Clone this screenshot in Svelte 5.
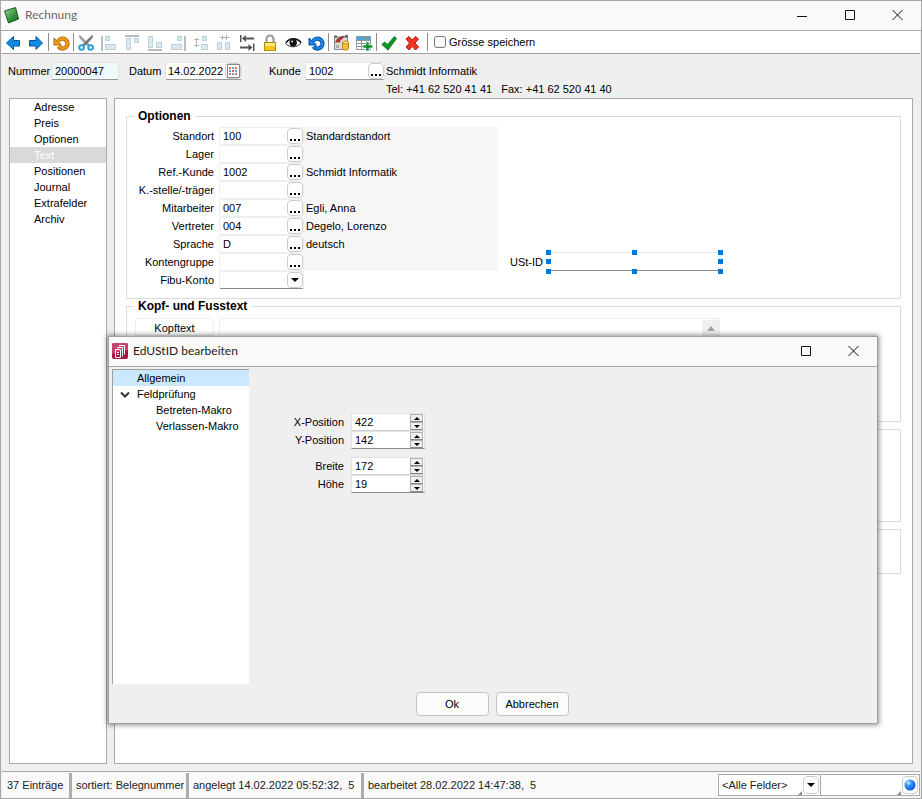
<script>
  const nav = ['Adresse', 'Preis', 'Optionen', 'Text', 'Positionen', 'Journal', 'Extrafelder', 'Archiv'];
  let active = $state('Text');

  const rows = [
    { id: 'standort', label: 'Standort', value: '100', info: 'Standardstandort' },
    { id: 'lager', label: 'Lager', value: '', info: '' },
    { id: 'refkunde', label: 'Ref.-Kunde', value: '1002', info: 'Schmidt Informatik' },
    { id: 'kst', label: 'K.-stelle/-träger', value: '', info: '' },
    { id: 'mitarbeiter', label: 'Mitarbeiter', value: '007', info: 'Egli, Anna' },
    { id: 'vertreter', label: 'Vertreter', value: '004', info: 'Degelo, Lorenzo' },
    { id: 'sprache', label: 'Sprache', value: 'D', info: 'deutsch' },
    { id: 'konten', label: 'Kontengruppe', value: '', info: '' }
  ];

  const tree = [
    { label: 'Allgemein', level: 1 },
    { label: 'Feldprüfung', level: 1, open: true },
    { label: 'Betreten-Makro', level: 2 },
    { label: 'Verlassen-Makro', level: 2 }
  ];
  let selected = $state('Allgemein');

  let spins = $state([
    [{ id: 'xpos', label: 'X-Position', value: 422 }, { id: 'ypos', label: 'Y-Position', value: 142 }],
    [{ id: 'breite', label: 'Breite', value: 172 }, { id: 'hoehe', label: 'Höhe', value: 19 }]
  ]);

  const handles = ['tl', 'tc', 'tr', 'ml', 'mr', 'bl', 'bc', 'br'];

  const box = 'fill="#dbeaf1" stroke="#b9cfda"';
  const bar = 'fill="#b9bcbf"';
  const turn = (fill, edge) =>
    `<path d="M5 8.500A5 5 0 1 1 5.500 13.500" fill="none" stroke="${edge}" stroke-width="4.200"/><path d="M1 5V12H8.500z" fill="${fill}" stroke="${edge}" stroke-linejoin="round"/><path d="M5 8.500A5 5 0 1 1 5.800 13.800" fill="none" stroke="${fill}" stroke-width="2.400"/>`;

  const tools = [
    { name: 'Zurück', svg: '<path d="M1.5 10 8.5 3.5V7.500H14.500V13H8.500V16.500z" fill="#0c8ce0" stroke="#0b4fa5" stroke-linejoin="round"/>' },
    { name: 'Vorwärts', svg: '<path d="M14.500 10 8 3.500V7.500H1.500V13H8V16.500z" fill="#0c8ce0" stroke="#0b4fa5" stroke-linejoin="round"/>' },
    { sep: true },
    { name: 'Rückgängig', svg: turn('#f79a10', '#b56a08') },
    { sep: true },
    { name: 'Ausschneiden', svg: '<path d="M1 2 2.500 2.500 12 12 10 13.500 7 11 1.500 5z" fill="#999c9f"/><path d="M15 2 13.500 2.500 4 12 6 13.500 9 11 14.500 5z" fill="#77797c"/><circle cx="3.600" cy="14.500" r="2.300" fill="none" stroke="#2a9fdc" stroke-width="2"/><circle cx="12.600" cy="14.500" r="2.300" fill="none" stroke="#2a9fdc" stroke-width="2"/>' },
    { name: 'Links ausrichten', svg: `<path d="M0 3h2v15H0z" ${bar}/><path d="M4.500 3.500h4v4h-4zM4.500 11.500h10v5h-10z" ${box}/>` },
    { name: 'Oben ausrichten', svg: `<path d="M1 2h14v2H1z" ${bar}/><path d="M2.500 5.500h4v11h-4zM10.500 5.500h4v4h-4z" ${box}/>` },
    { name: 'Unten ausrichten', svg: `<path d="M1 16h14v2H1z" ${bar}/><path d="M1.500 3.500h4v11h-4zM9.500 9.500h5v5h-5z" ${box}/>` },
    { name: 'Rechts ausrichten', svg: `<path d="M14 3h2v15h-2z" ${bar}/><path d="M7.500 3.500h4v4h-4zM1.500 11.500h10v5h-10z" ${box}/>` },
    { name: 'Vertikal verteilen', svg: `<path d="M1 6.500h5M1 12.500h5M3.500 5v9" stroke="#b0b4b7"/><path d="M9.500 3.500h4v4h-4zM8.500 11.500h6v5h-6z" ${box}/>` },
    { name: 'Horizontal verteilen', svg: `<path d="M3.500 4.500h10M6.500 2v5M10.500 2v5" stroke="#b0b4b7"/><path d="M1.500 9.500h4v7h-4zM9.500 9.500h4v7h-4z" ${box}/>` },
    { name: 'Tabulatorfolge', svg: '<path d="M1 2h1.500v7H1zM14 10.500h1.500V18H14z" fill="#555"/><path d="M15 5.500H5M1 14.500h10" stroke="#555" stroke-width="2"/><path d="M3 5.500 7 2v7zM13.500 14.500l-4-3.500v7z" fill="#555"/>' },
    { name: 'Sperren', svg: '<path d="M4.500 10V6a3.500 3.500 0 0 1 7 0V10" fill="none" stroke="#9a9da1" stroke-width="2.200"/><rect x="2.500" y="9.500" width="11" height="8" fill="#f5c518" stroke="#b18a10"/><path d="M3 10h10v3H3z" fill="#ffe97a"/>' },
    { name: 'Anzeigen', svg: '<path d="M.5 10.500C4.500 4.500 12 4.500 16 10 12 15 5 15 .5 10.500z" fill="#fff" stroke="#333"/><path d="M1 9.500C5 4.500 12 4.500 16 9.500" fill="none" stroke="#111" stroke-width="1.600"/><circle cx="8.200" cy="9.800" r="3.700" fill="#111"/><circle cx="7.200" cy="8.500" r="1" fill="#ddd"/>' },
    { name: 'Wiederherstellen', svg: turn('#1786e0', '#0a4aa0') },
    { sep: true },
    { name: 'Archivieren', svg: '<path d="M1.500 4v12.500h13V4z" fill="#dedede" stroke="#8a8a8a"/><path d="M1 4.500V2.500h3v2zM12 4.500V2h3v2.500z" fill="#666"/><path d="M3.500 12.500h2v2h-2z" fill="#fff" stroke="#999"/><path d="M2 9.500C3.500 5 7 2.500 12 3L9 6.500C8 6.500 7.500 7.500 7 9.500z" fill="#a83a3c"/><path d="M9.500 9.500v6c0 2 6 2 6 0v-6z" fill="#f9c04a" stroke="#b87b0b"/><ellipse cx="12.500" cy="9.500" rx="3" ry="1.500" fill="#ffe8ac" stroke="#b87b0b"/>' },
    { name: 'Tabelle ergänzen', svg: '<path d="M.5 3.500h14v13H.5z" fill="#fff" stroke="#8d9aa0"/><path d="M1 4h13v3H1z" fill="#4da3d0"/><path d="M5.500 3v14M10.500 3v14M.5 7.500h14M.5 10.500h14M.5 13.500h14" stroke="#8d9aa0"/><path d="M10 9h3v3h3.500v3H13v3h-3v-3H7v-3h3z" fill="#149022" stroke="#fff" stroke-width=".5"/>' },
    { sep: true },
    { name: 'Übernehmen', svg: '<path d="M1 11.500 3.500 9l3 2.500L13.500 3.500l2 2L7 17z" fill="#12962a" stroke="#0c7a1f" stroke-linejoin="round"/>' },
    { name: 'Verwerfen', svg: '<path d="M2 6l3-2.500L8.200 7 11.500 3.500l3 2.500-3.500 4 3.500 4-3 3-3.300-3.700L5 17l-3-3 3.500-4z" fill="#f03420" stroke="#b81c10" stroke-linejoin="round"/>' }
  ];
</script>

{#snippet dots(label)}
  <button class="mini dots" aria-label={label}>
    <svg width="10" height="2" viewBox="0 0 10 2"><path d="M0 0h2v2H0zM4 0h2v2H4zM8 0h2v2H8z" /></svg>
  </button>
{/snippet}

{#snippet maximize()}
  <button class="cap" aria-label="Maximieren">
    <svg width="12" height="12" viewBox="0 0 12 12"><path d="M2.500 1.500h9v9h-9z" /></svg>
  </button>
{/snippet}

{#snippet close()}
  <button class="cap" aria-label="Schliessen">
    <svg width="12" height="12" viewBox="0 0 12 12"><path d="M1.500 1l10 10M11.500 1l-10 10" /></svg>
  </button>
{/snippet}

<main class="window">
  <header class="title">
    <svg width="18" height="18" viewBox="0 0 18 18">
      <defs><linearGradient id="leaf" x1="0" y1="0" x2="1" y2="1"><stop offset="0" stop-color="#a5d6a5" /><stop offset=".5" stop-color="#43a047" /><stop offset="1" stop-color="#0b5c14" /></linearGradient></defs>
      <path d="M1.500 5 12.500 1.500 15.500 13 5.500 17z" fill="url(#leaf)" stroke="#175c1c" stroke-linejoin="round" />
    </svg>
    <h1>Rechnung</h1>
    <button class="cap" aria-label="Minimieren">
      <svg width="12" height="12" viewBox="0 0 12 12"><path d="M2 7.500h10" /></svg>
    </button>
    {@render maximize()}
    {@render close()}
  </header>

  <div class="toolbar">
    {#each tools as t}
      {#if t.sep}
        <span class="sep"></span>
      {:else}
        <button class="tool" aria-label={t.name}>
          <svg width="17" height="18" viewBox="0 0 17 18">{@html t.svg}</svg>
        </button>
      {/if}
    {/each}
    <span class="sep wide"></span>
    <label class="check"><input type="checkbox" />Grösse speichern</label>
  </div>

  <section class="head">
    <label class="nummer" for="nummer">Nummer</label>
    <div class="field f-nummer"><input id="nummer" value="20000047" /></div>
    <label class="datum" for="datum">Datum</label>
    <div class="field f-datum">
      <input id="datum" value="14.02.2022" />
      <button class="mini" aria-label="Kalender">
        <svg width="13" height="14" viewBox="0 0 13 14">
          <path d="M.5.5h12v13H.5z" fill="#fff" stroke="#888" />
          <path d="M2 3h2v2H2zM8 3h2v2H8zM5 6h2v2H5zM2 9h2v2H2zM8 9h2v2H8z" fill="#e8694f" />
          <path d="M5 3h2v2H5zM2 6h2v2H2zM8 6h2v2H8zM5 9h2v2H5z" fill="#5aa9dc" />
        </svg>
      </button>
    </div>
    <label class="kunde" for="kunde">Kunde</label>
    <div class="field f-kunde">
      <input id="kunde" value="1002" />
      {@render dots('Kunde wählen')}
    </div>
    <div class="contact">
      <span>Schmidt Informatik</span>
      <span>Tel: +41 62 520 41 41 &nbsp; Fax: +41 62 520 41 40</span>
    </div>
  </section>

  <div class="body">
    <nav>
      {#each nav as n}
        <button class:active={n === active} onclick={() => (active = n)}>{n}</button>
      {/each}
    </nav>

    <div class="sheet">
      <fieldset>
        <legend>Optionen</legend>
        <div class="options">
          <div class="rows">
            {#each rows as r}
              <div class="row">
                <label for={r.id}>{r.label}</label>
                <div class="field cell"><input id={r.id} value={r.value} />{@render dots(r.label + ' wählen')}</div>
                <span class="info">{r.info}</span>
              </div>
            {/each}
            <div class="row">
              <label for="fibu">Fibu-Konto</label>
              <div class="field cell last">
                <select id="fibu"><option></option></select>
                <span class="mini"><i class="down"></i></span>
              </div>
            </div>
          </div>
          <div class="ust">
            <label for="ust">USt-ID</label>
            <div class="frame">
              <input id="ust" />
              {#each handles as h}<i class="handle {h}"></i>{/each}
            </div>
          </div>
        </div>
      </fieldset>

      <fieldset>
        <legend>Kopf- und Fusstext</legend>
        <div class="texts">
          <button class="kopf">Kopftext</button>
          <div class="memo">
            <textarea aria-label="Kopftext"></textarea>
            <button aria-label="Nach oben"><i class="up"></i></button>
          </div>
        </div>
      </fieldset>
      <fieldset class="group tall"></fieldset>
      <fieldset class="group"></fieldset>
    </div>
  </div>

  <footer>
    <span class="s1">37 Einträge</span>
    <span class="s2">sortiert: Belegnummer</span>
    <span class="s3">angelegt 14.02.2022 05:52:32,&nbsp; 5</span>
    <span class="s4">bearbeitet 28.02.2022 14:47:38,&nbsp; 5</span>
    <div class="filter">
      <select aria-label="Feldauswahl"><option>&lt;Alle Felder&gt;</option></select>
      <i class="grip"></i>
      <span class="mini"><i class="down"></i></span>
    </div>
    <div class="filter search">
      <input aria-label="Suche" />
      <i class="grip"></i>
      <button class="mini" aria-label="Suchen">
        <svg width="12" height="12" viewBox="0 0 12 12">
          <defs><radialGradient id="ball" cx=".35" cy=".3" r=".75"><stop offset="0" stop-color="#d5efff" /><stop offset=".35" stop-color="#369cff" /><stop offset="1" stop-color="#0550d8" /></radialGradient></defs>
          <circle cx="6" cy="6" r="5.500" fill="url(#ball)" />
        </svg>
      </button>
    </div>
  </footer>

  <div class="dialog" role="dialog" aria-labelledby="dlg">
    <header class="title dark">
      <svg width="16" height="16" viewBox="0 0 16 16">
        <rect width="16" height="16" rx="2" fill="#a81744" />
        <path d="M0 2a2 2 0 0 1 2-2h12a2 2 0 0 1 2 2v5L0 11z" fill="#c0446b" />
        <g fill="none" stroke="#fff"><path d="M7 2.500h5.500v9M5 4.500h5.500v9" /><path d="M3 6.500h5.500v8H3.500v-8M5 9.500h2M5 11.500h2" /></g>
      </svg>
      <h2 id="dlg">EdUStID bearbeiten</h2>
      {@render maximize()}
      {@render close()}
    </header>
    <div class="dbody">
      <div class="tree" role="tree">
        {#each tree as t}
          <button role="treeitem" aria-selected={t.label === selected} class:sub={t.level === 2} class:selected={t.label === selected} onclick={() => (selected = t.label)}>
            {#if t.open}<svg class="chev" width="10" height="7" viewBox="0 0 10 7"><path d="M1 1.500l4 4 4-4" /></svg>{/if}{t.label}
          </button>
        {/each}
      </div>
      <form class="spins">
        {#each spins as pair}
          <div class="pair">
            {#each pair as s}
              <div class="spinrow">
                <label for={s.id}>{s.label}</label>
                <div class="spin">
                  <input id={s.id} type="number" bind:value={s.value} />
                  <span class="arrows">
                    <button type="button" aria-label="{s.label} erhöhen" onclick={() => s.value++}><svg width="6" height="3" viewBox="0 0 6 3"><path d="M0 3l3-3 3 3z" /></svg></button>
                    <button type="button" aria-label="{s.label} verringern" onclick={() => s.value--}><svg width="6" height="3" viewBox="0 0 6 3"><path d="M0 0l3 3 3-3z" /></svg></button>
                  </span>
                </div>
              </div>
            {/each}
          </div>
        {/each}
      </form>
    </div>
    <div class="actions">
      <button>Ok</button>
      <button>Abbrechen</button>
    </div>
  </div>
</main>

<style>
  :global(body) { margin: 0; }
  * { box-sizing: border-box; }
  .window {
    position: relative;
    display: flex;
    flex-direction: column;
    min-height: 100vh;
    border: 1px solid #a8a8a8;
    background: #efefef;
    color: #000;
    font: 11px/18px "Liberation Sans", Arial, sans-serif;
  }
  button, input, select, textarea {
    margin: 0;
    padding: 0;
    border: 0;
    background: none;
    color: inherit;
    font: inherit;
    outline: none;
    appearance: none;
  }
  label, span { white-space: nowrap; }

  .title {
    display: flex;
    align-items: center;
    height: 30px;
    padding: 0 0 2px 2px;
    background: #f9f9f9;
    border-bottom: 1px solid #a8a8a8;
    color: #6a6a6a;
  }
  .title h1, .title h2 {
    flex: 1;
    margin: 0 0 0 4px;
    font: 12px/18px Lato, "Open Sans", sans-serif;
  }
  .title.dark { padding-left: 3px; color: #222; }
  .title.dark h2 { margin-left: 5px; }
  .cap { display: flex; align-items: center; justify-content: center; width: 48px; height: 27px; }
  .cap svg { fill: none; stroke: #111; }

  .toolbar {
    display: flex;
    align-items: center;
    height: 23px;
    margin: 0 1px;
    background: #fff;
    border-bottom: 1px solid #a0a0a0;
  }
  .tool { display: flex; align-items: center; justify-content: center; width: 23px; height: 22px; }
  .sep { width: 1px; height: 18px; margin-right: 1px; background: #8c8c8c; }
  .sep.wide { margin: 0 6px 0 3px; }
  .check { display: flex; align-items: center; gap: 3px; }
  .check input { width: 12px; height: 12px; border: 1px solid #777; border-radius: 3px; background: #f8f8f8; }

  .head { display: flex; align-items: flex-start; height: 44px; padding: 8px 0 0 7px; }
  .nummer { width: 43px; }
  .datum { width: 36px; margin-left: 10px; }
  .kunde { width: 36px; margin-left: 27px; }
  .contact { display: flex; flex-direction: column; margin-left: 1px; }
  .field {
    display: flex;
    height: 18px;
    border: 1px solid #e4e4e4;
    border-bottom-color: #999;
    border-radius: 2px;
    background: #fff;
  }
  .field input, .field select { flex: 1; min-width: 0; padding-left: 3px; }
  .field.f-nummer { width: 68px; background: #effaff; }
  .f-datum { width: 77px; }
  .f-datum input { padding-left: 2px; }
  .f-kunde { width: 80px; }
  .mini {
    display: flex;
    align-items: center;
    justify-content: center;
    flex: none;
    width: 16px;
    height: 16px;
    border: 1px solid #ccc;
    border-radius: 4px;
    background: #fff;
  }
  .dots { align-items: flex-end; padding-bottom: 2px; }
  .down { border: 4px solid transparent; border-top-color: #000; border-bottom: 0; }
  .up { border: 4px solid transparent; border-bottom: 5px solid #a0a0a0; border-top: 0; }

  .body { display: flex; flex: 1; gap: 7px; padding: 0 8px 7px; }
  nav, .sheet { border: 1px solid #a8a8a8; background: #fff; }
  nav { display: flex; flex-direction: column; flex: none; width: 98px; }
  nav button { height: 16px; padding-left: 24px; text-align: left; line-height: 16px; }
  nav .active { background: #d9d9d9; color: #fff; }
  .sheet { flex: 1; min-width: 0; padding: 10px 11px 0; }

  fieldset { min-width: 0; margin: 0; padding: 0; border: 1px solid #dcdcdc; }
  legend { margin-left: 7px; padding: 0 4px; font-weight: bold; font-size: 12px; line-height: 15px; }
  .options { display: flex; align-items: flex-start; padding: 3px 0 9px; }
  .row { display: flex; height: 18px; }
  .row label { width: 87px; margin-right: 5px; text-align: right; }
  .cell { width: 85px; border-color: #eee; }
  .cell.last { border-bottom-color: #888; }
  .info { width: 194px; padding-left: 2px; background: #f6f6f6; }
  .ust { display: flex; align-items: center; margin-top: 125px; }
  .ust label { width: 45px; margin-right: 5px; text-align: right; }
  .frame { position: relative; width: 173px; height: 19px; border: 1px solid #eee; border-bottom-color: #888; }
  .frame input { width: 100%; height: 17px; }
  .handle { position: absolute; width: 5px; height: 5px; background: #0078d7; }
  .tl, .tc, .tr { top: -3px; }
  .ml, .mr { top: 6px; }
  .bl, .bc, .br { bottom: -4px; }
  .tl, .ml, .bl { left: -3px; }
  .tc, .bc { left: 83px; }
  .tr, .mr, .br { right: -3px; }

  .texts { display: flex; align-items: flex-start; gap: 5px; height: 107px; padding: 4px 0 0 8px; }
  .kopf { width: 79px; height: 18px; border: 1px solid #eee; border-radius: 3px; }
  .memo { display: flex; width: 501px; height: 90px; padding: 1px 0 1px 1px; border: 1px solid #eee; }
  .memo textarea { flex: 1; min-width: 0; resize: none; }
  .memo button { display: flex; justify-content: center; align-items: flex-start; width: 17px; padding-top: 6px; background: #efefef; }
  .group { height: 45px; margin-top: 7px; }
  .group.tall { height: 93px; }

  footer {
    display: flex;
    align-items: center;
    height: 27px;
    margin: 0 1px;
    padding-left: 1px;
    background: #f9f9f9;
    border-top: 1px solid #a8a8a8;
    color: #222;
  }
  footer > span { line-height: 25px; border-right: 3px solid #adadad; padding-left: 4px; }
  .s1 { width: 69px; }
  .s2 { width: 117px; }
  .s3 { width: 175px; }
  footer > .s4 { flex: 1; border: 0; }
  .filter { display: flex; align-items: center; width: 103px; height: 22px; padding: 0 1px 0 3px; border: 1px solid #a8a8a8; background: #fff; }
  .filter select, .filter input { flex: 1; min-width: 0; height: 18px; }
  .filter .mini { height: 18px; }
  .search { width: 99px; border-left: 0; }
  .grip { align-self: flex-end; margin-right: 1px; border: 2px solid #888; border-top-color: transparent; border-left-color: transparent; }

  .dialog {
    position: absolute;
    top: 335px;
    left: 107px;
    right: 43px;
    border: 1px solid #a0a0a0;
    background: #efefef;
    box-shadow: 0 0 5px 1px rgba(0, 0, 0, 0.45);
  }
  .dbody { display: flex; padding: 2px 3px 0; }
  .tree {
    display: flex;
    flex-direction: column;
    width: 137px;
    height: 315px;
    border-top: 1px solid #a0a0a0;
    border-left: 1px solid #a0a0a0;
    background: #fff;
  }
  .tree button { position: relative; height: 16px; padding-left: 24px; text-align: left; line-height: 16px; }
  .tree .sub { padding-left: 43px; }
  .tree .selected { background: #cce8ff; }
  .chev { position: absolute; left: 7px; top: 5px; fill: none; stroke: #333; stroke-width: 2; }
  .spins { padding: 44px 0 0 15px; }
  .pair { margin-bottom: 8px; }
  .spinrow { display: flex; gap: 7px; }
  .spinrow label { width: 80px; text-align: right; }
  .spin { display: flex; width: 74px; height: 18px; padding-right: 1px; border: 1px solid #e2e2e2; border-bottom-color: #d0d0d0; background: #fff; }
  .spinrow:last-child .spin { border-bottom-color: #888; }
  .spin input { flex: 1; min-width: 0; padding-left: 3px; appearance: textfield; }
  .spin input::-webkit-inner-spin-button { appearance: none; }
  .arrows { display: flex; flex-direction: column; width: 13px; }
  .arrows button { display: flex; flex: 1; align-items: center; justify-content: center; border: 1px solid #b0b0b0; border-bottom-color: #888; background: #f0f0f0; }
  .actions { display: flex; justify-content: center; gap: 7px; padding: 8px 2px 7px 0; }
  .actions button { width: 73px; height: 24px; border: 1px solid #c4c4c4; border-radius: 4px; background: #fbfbfb; }
</style>
